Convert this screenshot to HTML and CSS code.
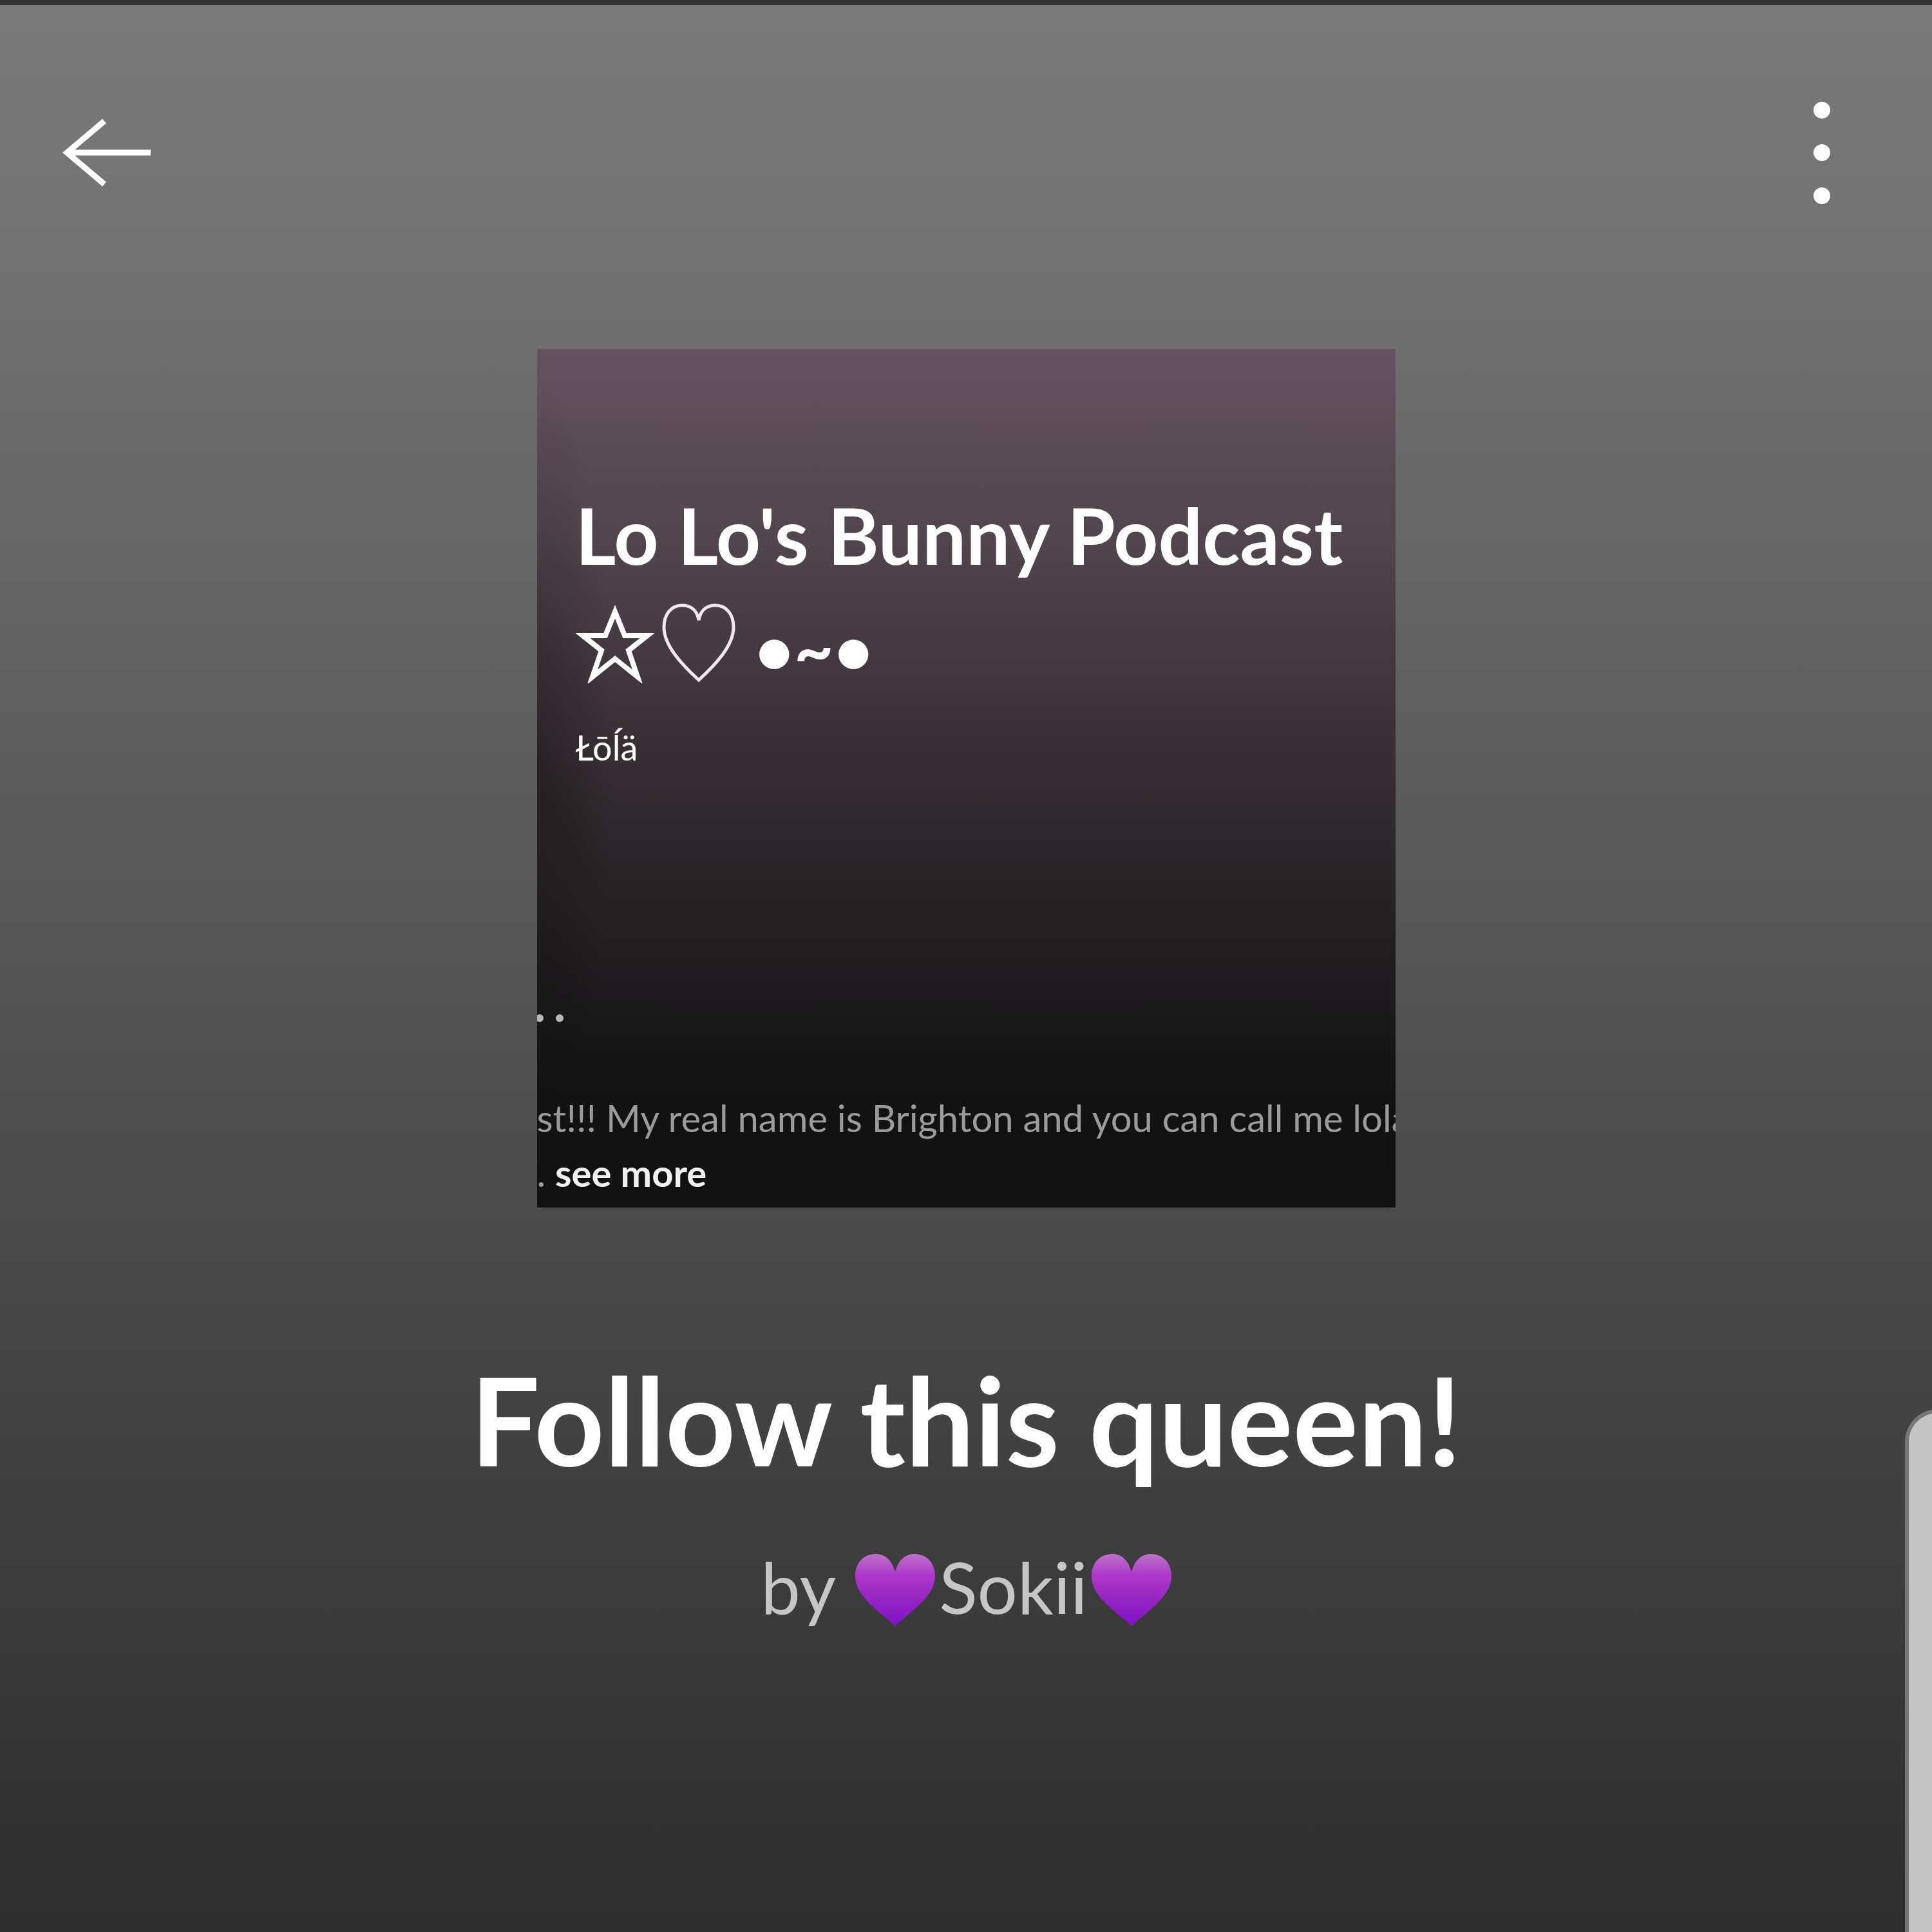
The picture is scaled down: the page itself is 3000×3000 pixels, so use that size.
FILE: index.html
```html
<!DOCTYPE html>
<html lang="en">
<head>
    <meta charset="UTF-8">
    <meta name="viewport" content="width=device-width, initial-scale=1.0">
    <title>Follow this queen!</title>
    <link rel="stylesheet" href="styles.css">
</head>
<body>
    <header class="header">
        <button class="icon-btn" type="button" aria-label="Back">
            <svg width="140" height="160" viewBox="0 0 140 160" fill="none" stroke="#fff" stroke-width="9">
                <path d="M138 79H8M66 30L8 79L66 128"/>
            </svg>
        </button>
        <button class="icon-btn" type="button" aria-label="More options">
            <svg width="160" height="160" viewBox="0 0 160 160" fill="#fff">
                <circle cx="80" cy="13" r="13"/>
                <circle cx="80" cy="79" r="13"/>
                <circle cx="80" cy="146" r="13"/>
            </svg>
        </button>
    </header>

    <main class="playlist">
        <section class="cover">
            <div class="cover-info">
                <h2 class="cover-title">Lo Lo's Bunny Podcast</h2>
                <div class="cover-symbols">
                    <svg width="122" height="124" viewBox="0 0 122 124" fill="none" stroke="#fff" stroke-width="8">
                        <path d="M61 13L76 50H111L82 73L96 114L61 86L26 114L40 73L11 50H46Z"/>
                    </svg>
                    <svg width="114" height="124" viewBox="0 0 114 124" fill="none" stroke="#efe8ee" stroke-width="5">
                        <path d="M57 26C54 8 42 3 31 3C14 3 3 17 3 37C3 66 32 96 57 119C82 96 111 66 111 37C111 17 100 3 83 3C72 3 60 8 57 26Z"/>
                    </svg>
                    <span>•~•</span>
                </div>
                <p class="cover-author">Łōĺä</p>
            </div>
            <svg class="cover-dots" width="48" height="16" viewBox="0 0 48 16" fill="#b8b8b8">
                <circle cx="4" cy="8" r="6"/>
                <circle cx="35" cy="8" r="6"/>
            </svg>
            <p class="cover-text">st!!! My real name is Brighton and you can call me lola<br>. <a class="see-more" href="#">see more</a></p>
        </section>

        <h1 class="title">Follow this queen!</h1>
        <p class="byline">
            <span>by</span>
            <svg class="heart" width="124" height="112" viewBox="0 0 124 112">
                <defs>
                    <linearGradient id="purple" x1="0" y1="0" x2="0" y2="1">
                        <stop offset="0" stop-color="#bd72c8"/>
                        <stop offset="0.3" stop-color="#ae38cb"/>
                        <stop offset="0.6" stop-color="#9826c4"/>
                        <stop offset="1" stop-color="#8012c8"/>
                    </linearGradient>
                </defs>
                <path fill="url(#purple)" d="M62 28C57 9 46 0 32 0C13 0 0 14 0 34C0 68 40 90 62 112C84 90 124 68 124 34C124 14 111 0 92 0C78 0 67 9 62 28Z"/>
            </svg>
            <span>Sokii</span>
            <svg class="heart" width="124" height="112" viewBox="0 0 124 112">
                <path fill="url(#purple)" d="M62 28C57 9 46 0 32 0C13 0 0 14 0 34C0 68 40 90 62 112C84 90 124 68 124 34C124 14 111 0 92 0C78 0 67 9 62 28Z"/>
            </svg>
        </p>
    </main>

    <div class="edge-panel"></div>
</body>
</html>
```
FILE: styles.css
```css
* { margin: 0; padding: 0; box-sizing: border-box; }
body { position: relative; min-height: 100vh; overflow-x: hidden; border-top: 8px solid #333; background: linear-gradient(#7b7b7b 0%, #6d6d6d 20%, #4a4a4a 64%, #2e2e2e 100%); color: white; font-family: Lato, "Liberation Sans", sans-serif; }
.header { display: flex; justify-content: space-between; padding: 150px 91px 0 96px; }
.icon-btn { background: none; border: none; cursor: pointer; }
.icon-btn svg { display: block; }
.playlist { display: flex; flex-direction: column; align-items: center; padding: 224px 48px 0; }

.cover { display: flex; flex-direction: column; width: 100%; max-width: 1333px; aspect-ratio: 1; overflow: hidden; background: radial-gradient(ellipse 9% 45% at 0 48%, rgba(0,0,0,0.25), rgba(0,0,0,0)), linear-gradient(#64535f 0%, #51464d 22%, #3f343b 41%, #2f2a2d 54%, #1d1b1d 75%, #121212 88%); }
.cover-info { padding: 209px 60px 0; white-space: nowrap; }
.cover-title { font-size: 121px; line-height: 160px; }
.cover-symbols { display: flex; align-items: center; gap: 12px; height: 176px; font-size: 106px; font-weight: bold; }
.cover-symbols span { margin-left: 18px; padding-top: 16px; }
.cover-author { margin-top: 38px; font-size: 54px; line-height: 72px; }
.cover-dots { margin-top: auto; }
.cover-text { margin: 104px 0 12px; color: #9b9b9b; font-size: 58px; line-height: 85px; white-space: nowrap; }
.see-more { color: #f0f0f0; font-weight: bold; text-decoration: none; }

.title { margin-top: 208px; font-size: 190px; line-height: 240px; text-align: center; }
.byline { display: flex; align-items: center; gap: 6px; margin-top: 70px; color: #c6c6c6; font-size: 110px; line-height: 140px; }
.byline span:first-child { margin-right: 24px; }
.heart { margin-top: 12px; }

.edge-panel { position: absolute; top: 2180px; right: -60px; bottom: 0; width: 102px; border: 6px solid #777; border-bottom: none; border-radius: 51px 51px 0 0; background: #c5c5c5; }
```
